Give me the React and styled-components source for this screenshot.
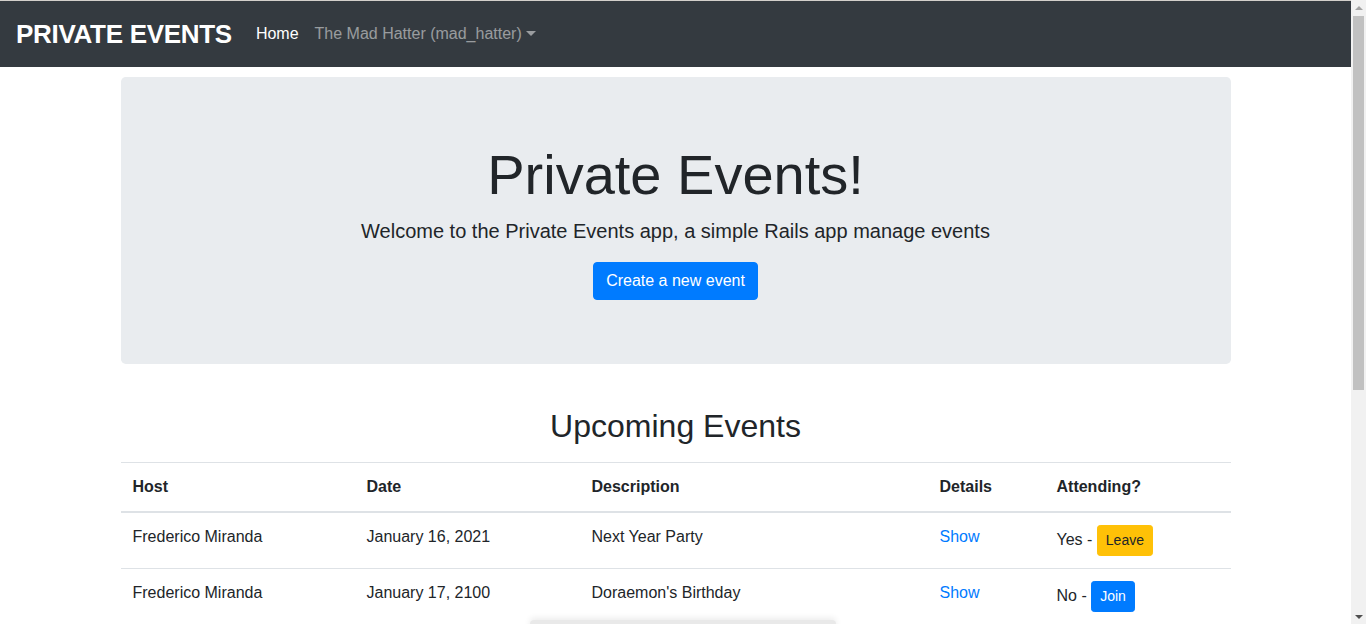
import styled, { createGlobalStyle } from 'styled-components';

const GlobalStyle = createGlobalStyle`
  *, *::before, *::after {
    box-sizing: border-box;
  }

  body {
    margin: 0 15px 0 0;
    border-top: 1px solid #d3cfcb;
    font-family: 'Liberation Sans', Arial, sans-serif;
    font-size: 16px;
    line-height: 1.5;
    color: #212529;
    background: #ffffff;
  }
`;

const events = [
  { host: 'Frederico Miranda', date: 'January 16, 2021', description: 'Next Year Party', attending: true },
  { host: 'Frederico Miranda', date: 'January 17, 2100', description: "Doraemon's Birthday", attending: false },
];

const EventsTable = ({ rows }) => (
  <Table>
    <colgroup>
      <col style={{ width: 234 }} />
      <col style={{ width: 225 }} />
      <col style={{ width: 348 }} />
      <col style={{ width: 117 }} />
      <col />
    </colgroup>
    <thead>
      <tr>
        <Th>Host</Th>
        <Th>Date</Th>
        <Th>Description</Th>
        <Th>Details</Th>
        <Th>Attending?</Th>
      </tr>
    </thead>
    <tbody>
      {rows.map((event, i) => (
        <tr key={i}>
          <Td>{event.host}</Td>
          <Td>{event.date}</Td>
          <Td>{event.description}</Td>
          <Td>
            <Link href="#">Show</Link>
          </Td>
          <Td>
            {event.attending ? 'Yes - ' : 'No - '}
            <SmallButton variant={event.attending ? 'warning' : 'primary'}>
              {event.attending ? 'Leave' : 'Join'}
            </SmallButton>
          </Td>
        </tr>
      ))}
    </tbody>
  </Table>
);

const App = () => {
  return (
    <>
      <GlobalStyle />
      <Navbar>
        <Brand href="#">PRIVATE EVENTS</Brand>
        <NavList>
          <NavLink href="#" active>
            Home
          </NavLink>
          <NavLink href="#">
            The Mad Hatter (mad_hatter)
            <Caret />
          </NavLink>
        </NavList>
      </Navbar>

      <Container>
        <Jumbotron>
          <Display>Private Events!</Display>
          <Lead>Welcome to the Private Events app, a simple Rails app manage events</Lead>
          <PrimaryButton href="#">Create a new event</PrimaryButton>
        </Jumbotron>

        <SectionTitle>Upcoming Events</SectionTitle>
        <EventsTable rows={events} />
      </Container>

      <FloatingBar />

      <ScrollTrack>
        <ScrollArrow direction="up" />
        <ScrollThumb />
        <ScrollArrow direction="down" />
      </ScrollTrack>
    </>
  );
};

const Navbar = styled.nav`
  display: flex;
  align-items: center;
  padding: 8px 16px;
  background-color: #343a40;
`;

const Brand = styled.a`
  margin-right: 16px;
  padding: 5px 0;
  font-size: 26px;
  line-height: 40px;
  font-weight: 700;
  letter-spacing: -0.3px;
  color: #ffffff;
  text-decoration: none;
  white-space: nowrap;
`;

const NavList = styled.div`
  display: flex;
  align-items: center;
`;

const NavLink = styled.a`
  display: flex;
  align-items: center;
  padding: 8px;
  font-size: 16px;
  line-height: 24px;
  text-decoration: none;
  color: ${props => (props.active ? '#ffffff' : 'rgba(255, 255, 255, 0.5)')};
`;

const Caret = styled.span`
  display: inline-block;
  margin-left: 4px;
  margin-top: -2px;
  width: 0;
  height: 0;
  border-top: 5px solid currentColor;
  border-left: 5px solid transparent;
  border-right: 5px solid transparent;
`;

const Container = styled.main`
  width: 100%;
  max-width: 1140px;
  margin: 0 auto;
  padding: 0 15px;
`;

const Jumbotron = styled.section`
  margin-top: 10px;
  padding: 64px 32px;
  border-radius: 4.8px;
  background-color: #e9ecef;
  text-align: center;
`;

const Display = styled.h1`
  margin: 0 0 8px;
  font-size: 56px;
  font-weight: 400;
  line-height: 1.2;
`;

const Lead = styled.p`
  margin: 0 0 16px;
  font-size: 20px;
  font-weight: 400;
  line-height: 1.5;
`;

const PrimaryButton = styled.a`
  display: inline-block;
  padding: 6px 12px;
  border: 1px solid #007bff;
  border-radius: 4px;
  background-color: #007bff;
  color: #ffffff;
  font-size: 16px;
  line-height: 24px;
  text-decoration: none;
`;

const SectionTitle = styled.h2`
  margin: 43px 0 16px;
  font-size: 32px;
  font-weight: 400;
  line-height: 1.2;
  text-align: center;
`;

const Table = styled.table`
  width: 100%;
  table-layout: fixed;
  border-collapse: collapse;
  margin-bottom: 0;
`;

const Th = styled.th`
  padding: 12px;
  text-align: left;
  font-weight: 700;
  vertical-align: bottom;
  border-top: 1px solid #dee2e6;
  border-bottom: 2px solid #dee2e6;
`;

const Td = styled.td`
  padding: 12px;
  vertical-align: top;
  border-top: 1px solid #dee2e6;
`;

const Link = styled.a`
  color: #007bff;
  text-decoration: none;
`;

const SmallButton = styled.button`
  display: inline-block;
  padding: 4px 8px;
  border-radius: 3.2px;
  font-family: inherit;
  font-size: 14px;
  line-height: 21px;
  cursor: pointer;
  border: 1px solid ${props => (props.variant === 'warning' ? '#ffc107' : '#007bff')};
  background-color: ${props => (props.variant === 'warning' ? '#ffc107' : '#007bff')};
  color: ${props => (props.variant === 'warning' ? '#212529' : '#ffffff')};
`;

const FloatingBar = styled.div`
  position: fixed;
  left: 530px;
  bottom: -10px;
  width: 306px;
  height: 14px;
  border-radius: 4px;
  background-color: #e9e9e9;
  box-shadow: 0 -2px 6px rgba(0, 0, 0, 0.08);
`;

/* stand-in for the browser's classic scrollbar */
const ScrollTrack = styled.div`
  position: fixed;
  top: 0;
  right: 0;
  bottom: 0;
  width: 15px;
  display: flex;
  flex-direction: column;
  align-items: center;
  background-color: #f1f1f1;
`;

const ScrollArrow = styled.div`
  flex: 0 0 15px;
  width: 15px;
  display: flex;
  align-items: center;
  justify-content: center;
  margin-top: ${props => (props.direction === 'down' ? 'auto' : '0')};

  &::before {
    content: '';
    width: 0;
    height: 0;
    border-left: 4px solid transparent;
    border-right: 4px solid transparent;
    ${props =>
      props.direction === 'up'
        ? 'border-bottom: 4px solid #a3a3a3;'
        : 'border-top: 4px solid #505050;'}
  }
`;

const ScrollThumb = styled.div`
  width: 11px;
  height: 374px;
  margin-top: 1px;
  background-color: #c1c1c1;
`;

export default App;
